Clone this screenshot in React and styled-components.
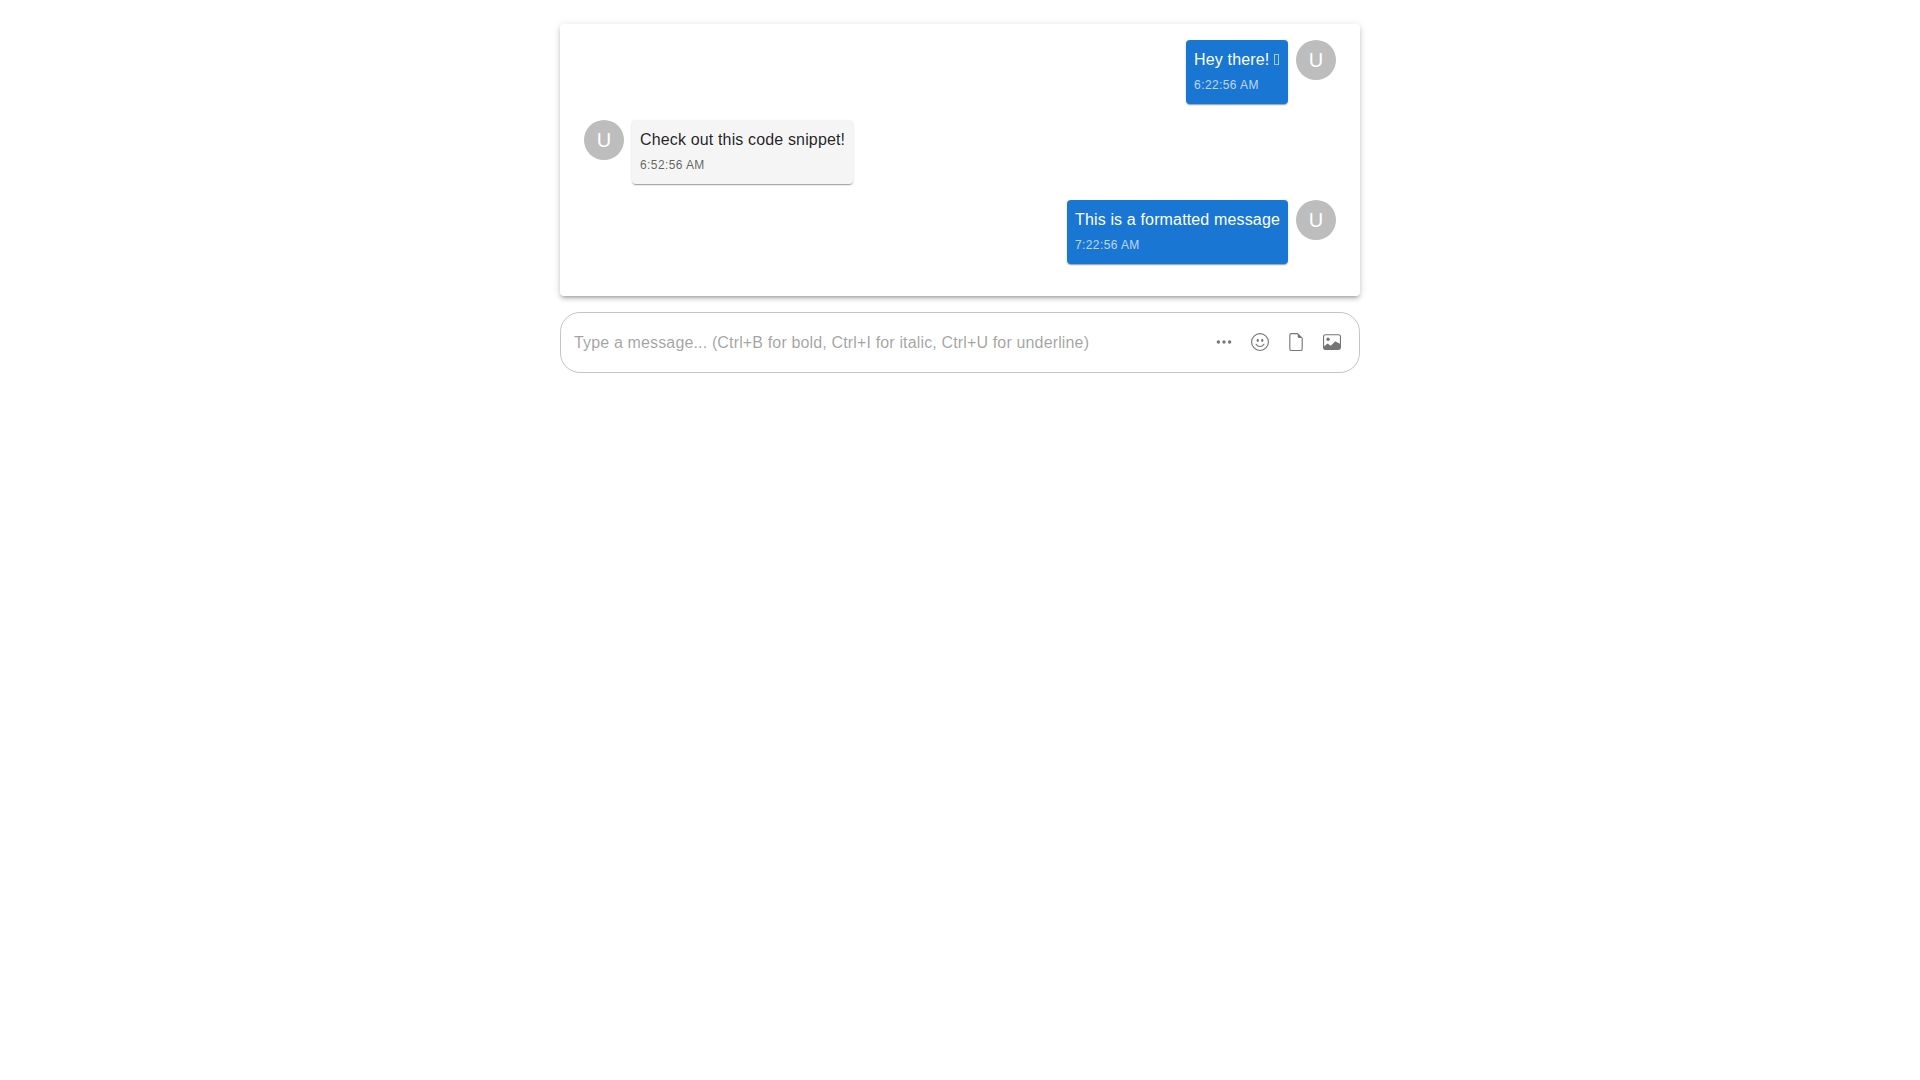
import React, { useState } from "react";
import styled, { createGlobalStyle } from "styled-components";
import { BsThreeDots, BsEmojiSmile, BsFileEarmark, BsImage } from "react-icons/bs";

const GlobalStyle = createGlobalStyle`
  *, *::before, *::after { box-sizing: border-box; }
  body {
    margin: 0;
    background: #fff;
    color: rgba(0, 0, 0, 0.87);
    font-family: "Liberation Sans", Arial, sans-serif;
    font-size: 16px;
    line-height: 24px;
    letter-spacing: 0.00938em;
  }
`;

const Page = styled.main`
  display: flex;
  flex-direction: column;
  gap: 16px;
  max-width: 800px;
  margin: 24px auto;
`;

const Thread = styled.ul`
  display: flex;
  flex-direction: column;
  gap: 16px;
  margin: 0;
  padding: 16px 24px 32px;
  list-style: none;
  background: #fff;
  border-radius: 4px;
  box-shadow: 0 3px 3px -2px rgba(0, 0, 0, 0.2), 0 3px 4px 0 rgba(0, 0, 0, 0.14),
    0 1px 8px 0 rgba(0, 0, 0, 0.12);
`;

const MessageRow = styled.li`
  display: flex;
  align-items: flex-start;
  gap: 8px;
  flex-direction: ${({ $own }) => ($own ? "row-reverse" : "row")};
`;

const Avatar = styled.div`
  display: flex;
  align-items: center;
  justify-content: center;
  flex: none;
  width: 40px;
  height: 40px;
  border-radius: 50%;
  background: #bdbdbd;
  color: #fff;
  font-size: 20px;
  line-height: 20px;
  letter-spacing: normal;
`;

const Bubble = styled.div`
  max-width: 70%;
  padding: 8px;
  border-radius: 4px;
  background: ${({ $own }) => ($own ? "#1976d2" : "#f5f5f5")};
  color: ${({ $own }) => ($own ? "#fff" : "inherit")};
  box-shadow: 0 2px 1px -1px rgba(0, 0, 0, 0.2), 0 1px 1px 0 rgba(0, 0, 0, 0.14),
    0 1px 3px 0 rgba(0, 0, 0, 0.12);
`;

const MessageText = styled.p`
  margin: 0;
`;

/* Empty box that stands for a glyph the font does not have. */
const GlyphBox = styled.span`
  display: inline-block;
  width: 5px;
  height: 11px;
  margin-right: 1px;
  border: 1px solid rgba(255, 255, 255, 0.6);
`;

const Timestamp = styled.time`
  font-size: 12px;
  line-height: 20px;
  letter-spacing: 0.03333em;
  opacity: 0.7;
`;

const Composer = styled.form`
  display: flex;
  align-items: center;
  gap: 8px;
  padding: 15px 13px 16px;
  border: 1px solid rgba(0, 0, 0, 0.23);
  border-radius: 20px;
`;

const MessageInput = styled.input`
  flex: 1;
  min-width: 0;
  padding: 2px 0 0;
  border: 0;
  outline: 0;
  background: none;
  color: inherit;
  font: inherit;
  letter-spacing: inherit;

  &::placeholder {
    color: inherit;
    opacity: 0.42;
  }
`;

const ToolButton = styled.button`
  display: flex;
  flex: none;
  padding: 5px;
  border: 0;
  border-radius: 50%;
  background: none;
  color: rgba(0, 0, 0, 0.54);
  font-size: 18px;
  cursor: pointer;

  &:hover {
    background: rgba(0, 0, 0, 0.04);
  }
`;

const messages = [
  { id: 1, own: true, text: "Hey there! ", hasGlyphBox: true, time: "6:22:56 AM" },
  { id: 2, own: false, text: "Check out this code snippet!", time: "6:52:56 AM" },
  { id: 3, own: true, text: "This is a formatted message", time: "7:22:56 AM" },
];

const tools = [
  { label: "Formatting options", Icon: BsThreeDots },
  { label: "Insert emoji", Icon: BsEmojiSmile },
  { label: "Attach file", Icon: BsFileEarmark },
  { label: "Attach image", Icon: BsImage },
];

function Message({ own, text, hasGlyphBox, time }) {
  return (
    <MessageRow $own={own}>
      <Avatar>U</Avatar>
      <Bubble $own={own}>
        <MessageText>
          {text}
          {hasGlyphBox && <GlyphBox />}
        </MessageText>
        <Timestamp>{time}</Timestamp>
      </Bubble>
    </MessageRow>
  );
}

export default function App() {
  const [draft, setDraft] = useState("");

  return (
    <>
      <GlobalStyle />
      <Page>
        <Thread>
          {messages.map(({ id, ...message }) => (
            <Message key={id} {...message} />
          ))}
        </Thread>
        <Composer onSubmit={(e) => e.preventDefault()}>
          <MessageInput
            aria-label="Message"
            placeholder="Type a message... (Ctrl+B for bold, Ctrl+I for italic, Ctrl+U for underline)"
            value={draft}
            onChange={(e) => setDraft(e.target.value)}
          />
          {tools.map(({ label, Icon }) => (
            <ToolButton key={label} type="button" aria-label={label}>
              <Icon />
            </ToolButton>
          ))}
        </Composer>
      </Page>
    </>
  );
}
